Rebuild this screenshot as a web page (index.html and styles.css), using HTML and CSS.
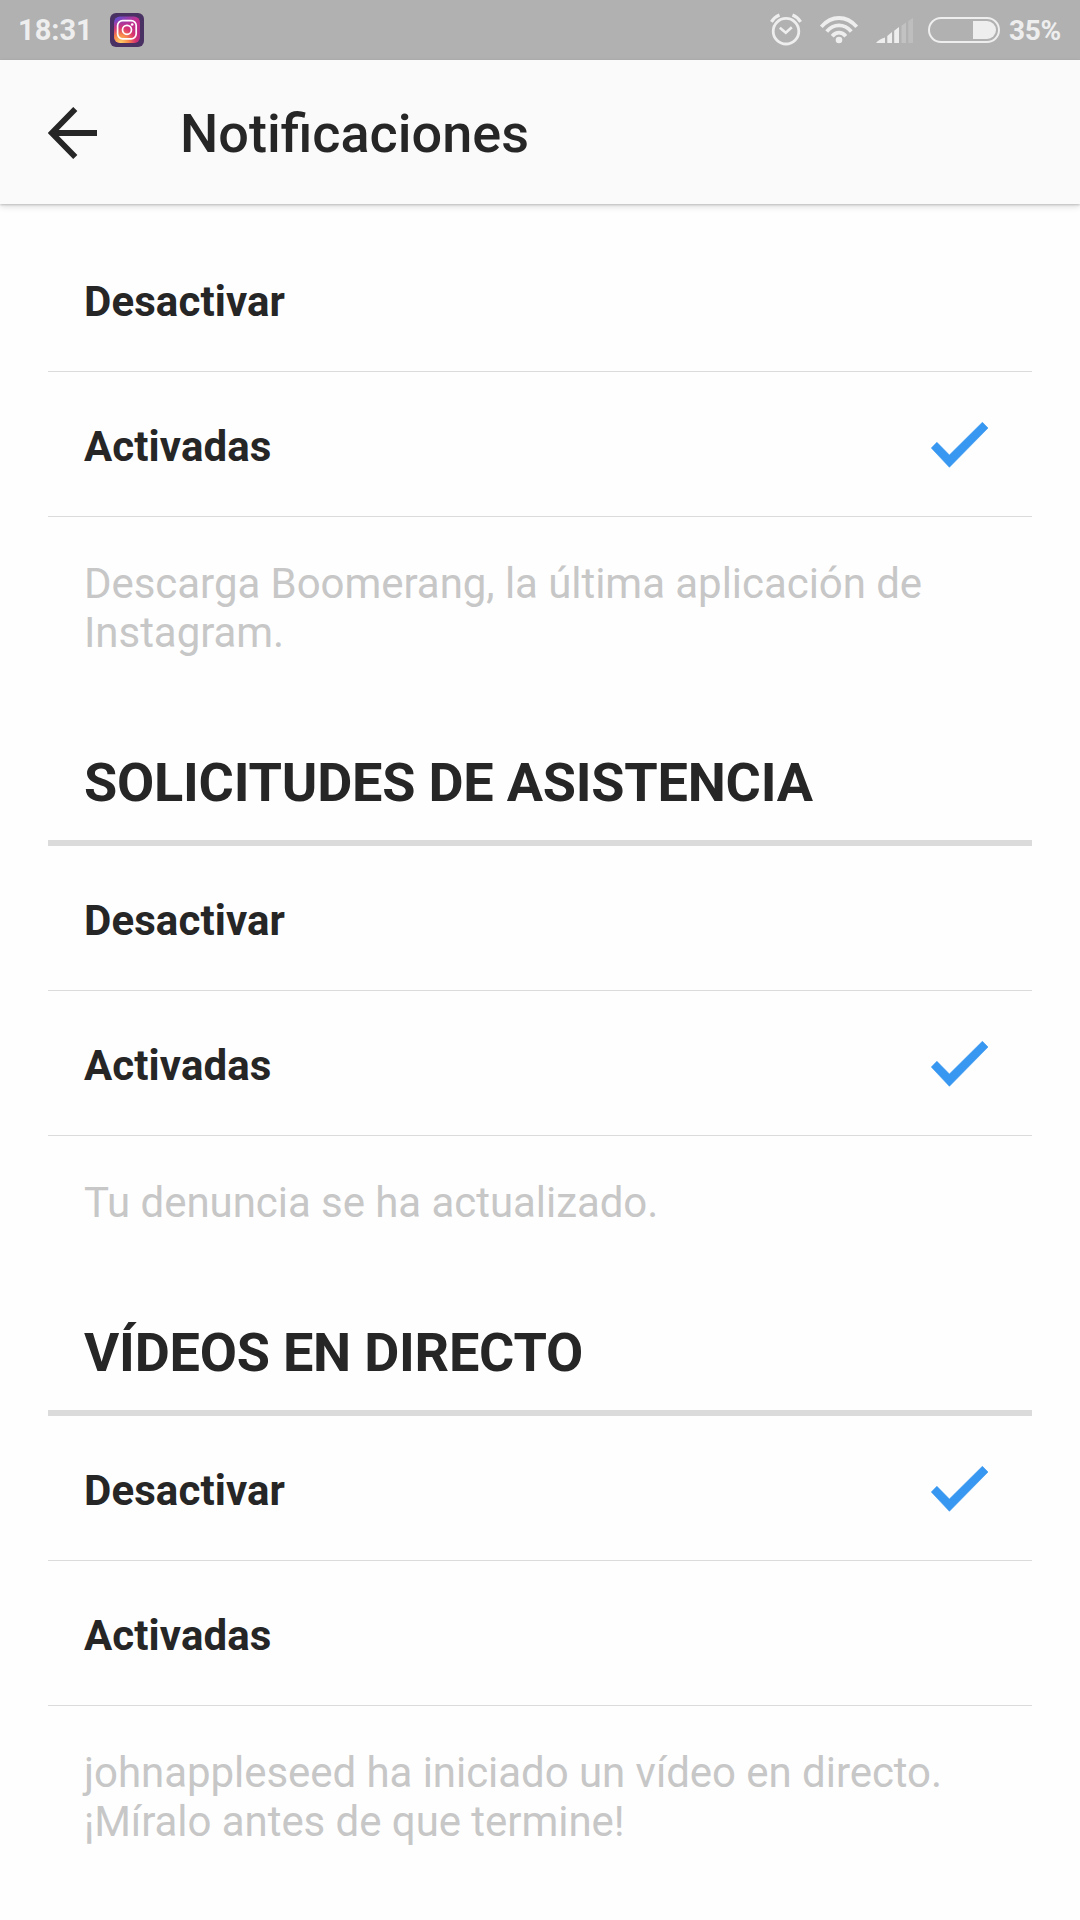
FILE: index.html
```html
<!DOCTYPE html>
<html lang="es">
<head>
<meta charset="utf-8">
<title>Notificaciones</title>
<link rel="stylesheet" href="styles.css">
</head>
<body>
<svg class="defs" width="0" height="0" aria-hidden="true">
  <symbol id="check" viewBox="0 0 57 46">
    <path d="M0.3 26 L5.9 20.3 L18.4 33 L51.4 0.3 L57 6 L18.4 45.3 Z" fill="#3897f0" stroke="#3897f0" stroke-width="0.6" stroke-linejoin="round"/>
  </symbol>
</svg>

<div class="status">
  <span class="time">18:31</span>
  <svg class="app-icon" width="34" height="34" viewBox="0 0 34 34">
    <defs>
      <linearGradient id="ig-base" x1="0" y1="0" x2="1" y2="1">
        <stop offset="0" stop-color="#5851db"/>
        <stop offset="0.5" stop-color="#c32f8e"/>
        <stop offset="1" stop-color="#a8287e"/>
      </linearGradient>
      <radialGradient id="ig-glow" cx="0.25" cy="1" r="0.9">
        <stop offset="0" stop-color="#ffd368"/>
        <stop offset="0.35" stop-color="#f8884a"/>
        <stop offset="0.65" stop-color="#e0386a" stop-opacity="0.8"/>
        <stop offset="1" stop-color="#c32f8e" stop-opacity="0"/>
      </radialGradient>
    </defs>
    <rect width="34" height="34" rx="6" fill="#4a3163"/>
    <rect x="4" y="3.5" width="26" height="26.5" rx="6" fill="url(#ig-base)"/>
    <rect x="4" y="3.5" width="26" height="26.5" rx="6" fill="url(#ig-glow)"/>
    <rect x="7.6" y="7.6" width="18.6" height="18.2" rx="5" fill="none" stroke="#fff" stroke-width="1.7"/>
    <circle cx="17" cy="16.8" r="4.5" fill="none" stroke="#fff" stroke-width="1.7"/>
    <circle cx="22.2" cy="11.5" r="1.3" fill="#fff"/>
  </svg>
  <div class="indicators">
    <svg class="alarm" width="32" height="33" viewBox="0 0 32 33" fill="none" stroke="#eee">
      <circle cx="16" cy="18.2" r="12.8" stroke-width="2.8"/>
      <path d="M9.8 14.8 L15.8 19.8 L21.8 14.2" stroke-width="2.6"/>
      <path d="M1.4 8.9 Q4.4 4 9.5 2.1 M22.5 2.1 Q27.6 4 30.6 8.9" stroke-width="3.2"/>
    </svg>
    <svg class="wifi" width="38" height="28" viewBox="0 0 38 28" fill="none" stroke="#eee" stroke-width="3.8">
      <path d="M1.3 10.8 Q9 2 19 2 T36.7 10.8"/>
      <path d="M6.7 15.5 Q12 9.4 19 9.4 T31.3 15.5"/>
      <path d="M12.2 20.2 Q15.2 16.7 19 16.7 T25.8 20.2"/>
      <circle cx="19" cy="24" r="3.3" fill="#eee" stroke="none"/>
    </svg>
    <svg class="signal" width="38" height="26" viewBox="0 0 38 26">
      <path d="M0 25 Q3 21 9 19.5 V25 Z M11.3 18 L16 14 V25 H11.3 Z M18.2 12.8 L23 9 V25 H18.2 Z" fill="#eee"/>
      <path d="M25.5 7.8 L30 4.5 V25 H25.5 Z" fill="#c2c2c2"/>
      <path d="M32.3 3 L37 0 V25 H32.3 Z" fill="#bebebe"/>
    </svg>
    <svg class="battery" width="72" height="26" viewBox="0 0 72 26">
      <rect x="1" y="1" width="70" height="24" rx="12" fill="none" stroke="#eee" stroke-width="2"/>
      <path d="M45 4 H59 A9 9 0 0 1 59 22 H45 Z" fill="#eee"/>
    </svg>
    <span class="percent">35%</span>
  </div>
</div>

<header class="header">
  <svg class="back" width="49" height="52" viewBox="0 0 49 52" fill="none" stroke="#262626" stroke-width="5.8">
    <path d="M49 26 H4 M27.3 2 L3.8 26 L27.3 50"/>
  </svg>
  <h1 class="title">Notificaciones</h1>
</header>

<main class="content">
  <section class="group">
    <div class="row"><span>Desactivar</span></div>
    <div class="row"><span>Activadas</span><svg class="check"><use href="#check"/></svg></div>
    <p class="hint">Descarga Boomerang, la última aplicación de<br>Instagram.</p>
  </section>

  <section class="group">
    <h2 class="heading">SOLICITUDES DE ASISTENCIA</h2>
    <div class="row"><span>Desactivar</span></div>
    <div class="row"><span>Activadas</span><svg class="check"><use href="#check"/></svg></div>
    <p class="hint">Tu denuncia se ha actualizado.</p>
  </section>

  <section class="group">
    <h2 class="heading">VÍDEOS EN DIRECTO</h2>
    <div class="row"><span>Desactivar</span><svg class="check"><use href="#check"/></svg></div>
    <div class="row"><span>Activadas</span></div>
    <p class="hint">johnappleseed ha iniciado un vídeo en directo.<br>¡Míralo antes de que termine!</p>
  </section>
</main>
</body>
</html>
```

FILE: styles.css
```css
* {
  box-sizing: border-box;
}

body {
  margin: 0;
  width: 1080px;
  height: 1920px;
  overflow: hidden;
  background: #fefefe;
  color: #262626;
  font-family: Roboto, "Noto Sans", sans-serif;
}

.defs {
  display: none;
}

.status {
  display: flex;
  align-items: flex-start;
  height: 60px;
  padding: 13px 19px 0 18px;
  background: #b1b1b1;
  color: #eee;
  font-weight: 700;
}

.time {
  width: 92px;
  font-size: 29px;
  line-height: 35px;
}

.indicators {
  display: flex;
  margin-left: auto;
}

.wifi {
  margin: 3px 0 0 18px;
}

.signal {
  margin: 5px 0 0 18px;
}

.battery {
  margin: 4px 0 0 14px;
}

.percent {
  width: 52px;
  margin-left: 9px;
  font-size: 28px;
  letter-spacing: -0.3px;
  line-height: 35px;
}

.header {
  display: flex;
  align-items: center;
  height: 144px;
  padding: 3px 48px 0;
  background: #fafafa;
  box-shadow: 0 1px 2px rgba(0, 0, 0, 0.18), 0 3px 6px rgba(0, 0, 0, 0.12);
}

.back {
  margin-top: -1px;
}

.title {
  margin: 0 0 0 83px;
  font-size: 54px;
  font-weight: 500;
  line-height: 64px;
}

.content {
  padding: 23px 48px 0;
}

.row {
  display: flex;
  align-items: center;
  justify-content: space-between;
  height: 145px;
  padding: 6px 44px 0 36px;
  border-bottom: 1px solid #dbdbdb;
  font-size: 42px;
  font-weight: 700;
  letter-spacing: 0.1px;
  line-height: 50px;
}

.check {
  width: 57px;
  height: 46px;
  margin-top: -5px;
}

.hint {
  margin: 0;
  padding: 42px 36px 0;
  color: #c7c7c7;
  font-size: 42px;
  letter-spacing: -0.05px;
  line-height: 49px;
}

.heading {
  margin: 0;
  height: 189px;
  padding: 94px 36px 0;
  border-bottom: 6px solid #dbdbdb;
  font-size: 54px;
  font-weight: 700;
  letter-spacing: -0.22px;
  line-height: 64px;
  white-space: nowrap;
}
```
